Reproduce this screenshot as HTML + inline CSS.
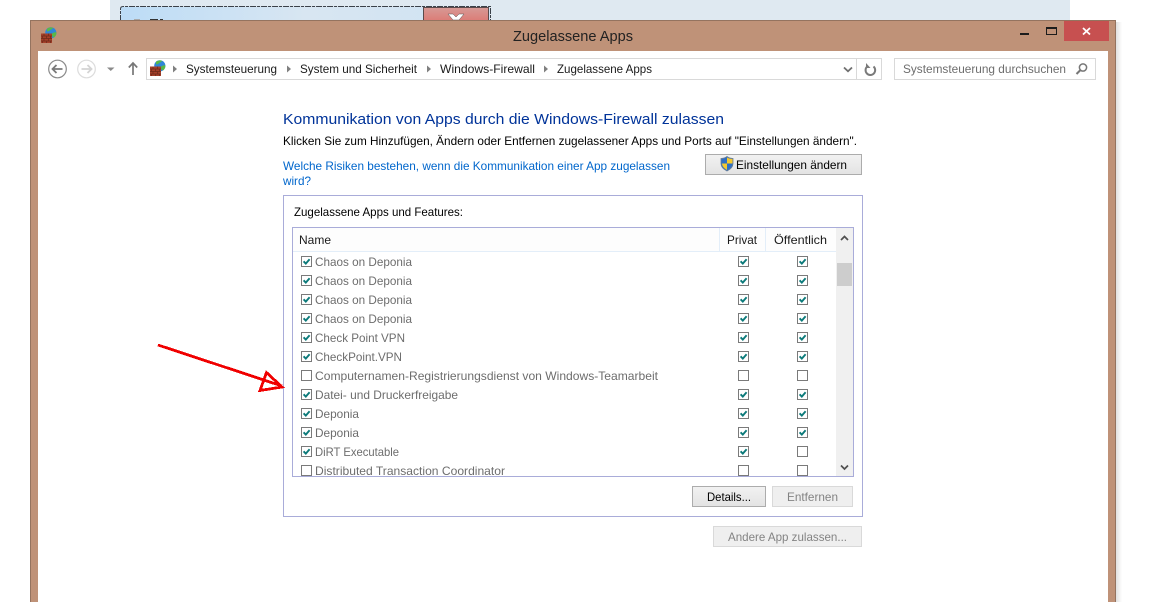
<!DOCTYPE html>
<html lang="de"><head><meta charset="utf-8"><title>Zugelassene Apps</title>
<style>
html,body{margin:0;padding:0;background:#fff;width:1170px;height:602px;overflow:hidden}
svg{display:block}
text{font-family:"Liberation Sans",sans-serif;font-size:12px;fill:#1a1a1a}
.g{fill:#6d6d6d}
.d{fill:#838383}
.l{fill:#0066cc}
</style></head><body>
<svg width="1170" height="602" viewBox="0 0 1170 602" xmlns="http://www.w3.org/2000/svg">
<defs>
<linearGradient id="bt" x1="0" y1="0" x2="0" y2="1"><stop offset="0" stop-color="#f2f2f2"/><stop offset="1" stop-color="#e3e3e3"/></linearGradient>
<linearGradient id="bw" x1="0" y1="0" x2="1" y2="0"><stop offset="0" stop-color="#bcdcf6"/><stop offset=".5" stop-color="#d8e6f2"/><stop offset="1" stop-color="#cfe2f3"/></linearGradient>
<linearGradient id="rd" x1="0" y1="0" x2="0" y2="1"><stop offset="0" stop-color="#d79a96"/><stop offset="1" stop-color="#dc7a74"/></linearGradient>
<linearGradient id="sh" x1="0" y1="0" x2="1" y2="0"><stop offset="0" stop-color="#000" stop-opacity=".12"/><stop offset="1" stop-color="#000" stop-opacity="0"/></linearGradient>
<symbol id="off" width="12" height="12" viewBox="0 0 12 12"><rect x=".5" y=".5" width="10" height="10" fill="#fff" stroke="#7a7a7a"/></symbol>
<symbol id="on" width="12" height="12" viewBox="0 0 12 12"><rect x=".5" y=".5" width="10" height="10" fill="#fff" stroke="#7a7a7a"/><path d="M2.600 5.300 4.800 7.600 8.600 3.200" fill="none" stroke="#0c7a7a" stroke-width="1.900"/></symbol>
<symbol id="fw" width="16" height="16" viewBox="0 0 16 16">
<circle cx="9.800" cy="5.800" r="5.600" fill="#2f86d8"/>
<path d="M6 1.800C8 .2 10.500 0 12 .8c-.5 1.500-2 1.500-3 2.500S7 4.500 6 4.200zM11 6.500c1.500-1 3-1.500 4.300-1.200.3 2-.5 4-2.300 5.200-1.500-.5-2.500-2.200-2-4z" fill="#58b848"/>
<rect x="0" y="6.500" width="11" height="9.500" fill="#a5402a"/>
<path d="M0 9h11M0 11.500h11M0 14h11M3 6.500V9M7.500 6.500V9M1.500 9v2.500M5.500 9v2.500M9.500 9v2.500M3 11.500V14M7.500 11.500V14M1.500 14v2M5.500 14v2M9.500 14v2" stroke="#6d2a1a" stroke-width=".7" fill="none"/>
</symbol>
</defs>

<!-- background window -->
<rect x="110" y="0" width="960" height="21" fill="#dfe9f1"/>
<rect x="121" y="7" width="369" height="14" fill="url(#bw)"/>
<path d="M120.500 21V9q0-2.500 2.500-2.500H490.500V21" fill="none" stroke="#3a4048" stroke-width="1" stroke-dasharray="6 1 3 1"/>
<rect x="423.500" y="7.500" width="65" height="14" fill="url(#rd)" stroke="#5a4a4a" stroke-width="1"/>
<path d="M448 14h5l3 3 3-3h5l-5 6h-6z" fill="#fff" stroke="#555" stroke-width=".5"/>
<rect x="134" y="19" width="6" height="2" fill="#aaa"/><rect x="150" y="19" width="8" height="2" fill="#333"/><rect x="160" y="19" width="3" height="2" fill="#333"/>

<!-- main window -->
<rect x="1116" y="22" width="6" height="580" fill="url(#sh)"/>
<rect x="30.500" y="20.500" width="1085" height="590" fill="#bf9278" stroke="#94735f"/>
<rect x="38" y="51" width="1070" height="560" fill="#fff"/>
<use href="#fw" x="41" y="27"/>
<text x="513" y="41" textLength="120" lengthAdjust="spacingAndGlyphs" style="font-size:14.500px;fill:#222">Zugelassene Apps</text>
<rect x="1020" y="33" width="9" height="2" fill="#1c1c1c"/>
<rect x="1046.500" y="27.500" width="10" height="7" fill="none" stroke="#1c1c1c"/><rect x="1046" y="27" width="11" height="2" fill="#1c1c1c"/>
<rect x="1064" y="21" width="45" height="20" fill="#c75050"/>
<path d="M1083 28l7 6.500M1090 28l-7 6.500" stroke="#fff" stroke-width="1.800"/>

<!-- nav -->
<circle cx="57.500" cy="69" r="8.800" fill="#fff" stroke="#8a8a8a" stroke-width="1.200"/>
<path d="M62.500 69H53M56.500 65 52.500 69l4 4" fill="none" stroke="#7a7a7a" stroke-width="1.800"/>
<circle cx="86.500" cy="69" r="8.800" fill="#fff" stroke="#dcdcdc" stroke-width="1.200"/>
<path d="M81.500 69H91M87.500 65l4 4-4 4" fill="none" stroke="#d4d4d4" stroke-width="1.800"/>
<path d="M107 67.500h7.500L110.750 71z" fill="#8a8a8a"/>
<path d="M133 75V63.500M128.800 67.500 133 63l4.200 4.500" fill="none" stroke="#777" stroke-width="1.700"/>
<rect x="146.500" y="58.500" width="735" height="21" fill="#fff" stroke="#d9d9d9"/>
<path d="M856.500 59v20" stroke="#d9d9d9"/>
<use href="#fw" x="150" y="60"/>
<path d="M173 65.500l4 3.500-4 3.500z" fill="#808080"/>
<text x="186" y="73" textLength="91" lengthAdjust="spacingAndGlyphs">Systemsteuerung</text>
<path d="M287 65.500l4 3.500-4 3.500z" fill="#808080"/>
<text x="300" y="73" textLength="117" lengthAdjust="spacingAndGlyphs">System und Sicherheit</text>
<path d="M427 65.500l4 3.500-4 3.500z" fill="#808080"/>
<text x="440" y="73" textLength="95" lengthAdjust="spacingAndGlyphs">Windows-Firewall</text>
<path d="M544 65.500l4 3.500-4 3.500z" fill="#808080"/>
<text x="557" y="73" textLength="95" lengthAdjust="spacingAndGlyphs">Zugelassene Apps</text>
<path d="M844 67.500l4 3.800 4-3.800" fill="none" stroke="#707070" stroke-width="1.800"/>
<path d="M873.500 66.500a4.800 4.800 0 1 1-6-.2" fill="none" stroke="#7a7a7a" stroke-width="2"/><path d="M866 63v5h4.500z" fill="#7a7a7a"/>
<rect x="894.500" y="58.500" width="201" height="21" fill="#fff" stroke="#d9d9d9"/>
<text x="903" y="73" textLength="163" lengthAdjust="spacingAndGlyphs" class="g">Systemsteuerung durchsuchen</text>
<circle cx="1083" cy="67.500" r="3.600" fill="none" stroke="#777" stroke-width="1.500"/><path d="M1080.500 70l-4 4" stroke="#777" stroke-width="2"/>

<!-- heading -->
<text x="283" y="124" textLength="441" lengthAdjust="spacingAndGlyphs" style="font-size:15px;fill:#003399">Kommunikation von Apps durch die Windows-Firewall zulassen</text>
<text x="283" y="145" textLength="574" lengthAdjust="spacingAndGlyphs" style="fill:#000">Klicken Sie zum Hinzufügen, Ändern oder Entfernen zugelassener Apps und Ports auf "Einstellungen ändern".</text>
<text x="283" y="170" textLength="387" lengthAdjust="spacingAndGlyphs" class="l">Welche Risiken bestehen, wenn die Kommunikation einer App zugelassen</text>
<text x="283" y="185" textLength="28" lengthAdjust="spacingAndGlyphs" class="l">wird?</text>

<!-- settings button -->
<rect x="705.500" y="154.500" width="156" height="20" fill="url(#bt)" stroke="#acacac"/>
<path d="M727 156.500c2 1.500 4 2 6 2v5c0 3.500-3 6-6 7.500-3-1.500-6-4-6-7.500v-5c2 0 4-.5 6-2z" fill="#2f6fc4" stroke="#6b7f96" stroke-width=".8"/>
<path d="M727 157.500v6h5.500v-4.500c-2 0-4-.5-5.500-1.500zM727 163.500h-5c.2 3 2.500 5 5 6.500z" fill="#f5c92e"/>
<text x="736" y="169" textLength="111" lengthAdjust="spacingAndGlyphs" style="fill:#000">Einstellungen ändern</text>

<!-- group box -->
<rect x="283.500" y="195.500" width="579" height="321" fill="#fff" stroke="#a9acd9"/>
<text x="294" y="216" textLength="169" lengthAdjust="spacingAndGlyphs" style="fill:#000">Zugelassene Apps und Features:</text>

<!-- list -->
<rect x="292.500" y="227.500" width="561" height="249" fill="#fff" stroke="#a9acd9"/>
<rect x="293" y="228" width="543" height="23" fill="#fdfdfd"/>
<path d="M293 251.500h543M719.500 228v23M765.500 228v23" stroke="#e3eef9" fill="none"/>
<text x="299" y="244" textLength="32" lengthAdjust="spacingAndGlyphs">Name</text>
<text x="727" y="244" textLength="30" lengthAdjust="spacingAndGlyphs">Privat</text>
<text x="774" y="244" textLength="53" lengthAdjust="spacingAndGlyphs">Öffentlich</text>

<rect x="836" y="228" width="17" height="248" fill="#f0f0f0"/>
<rect x="837" y="263" width="15" height="23" fill="#cdcdcd"/>
<path d="M841 240l3.500-3.500 3.500 3.500" fill="none" stroke="#505050" stroke-width="1.700"/>
<path d="M841 465.500l3.500 3.500 3.500-3.500" fill="none" stroke="#505050" stroke-width="1.700"/>

<use href="#on" x="301" y="256"/><text class="g" x="315" y="266" textLength="97" lengthAdjust="spacingAndGlyphs">Chaos on Deponia</text><use href="#on" x="738" y="256"/><use href="#on" x="797" y="256"/>
<use href="#on" x="301" y="275"/><text class="g" x="315" y="285" textLength="97" lengthAdjust="spacingAndGlyphs">Chaos on Deponia</text><use href="#on" x="738" y="275"/><use href="#on" x="797" y="275"/>
<use href="#on" x="301" y="294"/><text class="g" x="315" y="304" textLength="97" lengthAdjust="spacingAndGlyphs">Chaos on Deponia</text><use href="#on" x="738" y="294"/><use href="#on" x="797" y="294"/>
<use href="#on" x="301" y="313"/><text class="g" x="315" y="323" textLength="97" lengthAdjust="spacingAndGlyphs">Chaos on Deponia</text><use href="#on" x="738" y="313"/><use href="#on" x="797" y="313"/>
<use href="#on" x="301" y="332"/><text class="g" x="315" y="342" textLength="90" lengthAdjust="spacingAndGlyphs">Check Point VPN</text><use href="#on" x="738" y="332"/><use href="#on" x="797" y="332"/>
<use href="#on" x="301" y="351"/><text class="g" x="315" y="361" textLength="87" lengthAdjust="spacingAndGlyphs">CheckPoint.VPN</text><use href="#on" x="738" y="351"/><use href="#on" x="797" y="351"/>
<use href="#off" x="301" y="370"/><text class="g" x="315" y="380" textLength="343" lengthAdjust="spacingAndGlyphs">Computernamen-Registrierungsdienst von Windows-Teamarbeit</text><use href="#off" x="738" y="370"/><use href="#off" x="797" y="370"/>
<use href="#on" x="301" y="389"/><text class="g" x="315" y="399" textLength="143" lengthAdjust="spacingAndGlyphs">Datei- und Druckerfreigabe</text><use href="#on" x="738" y="389"/><use href="#on" x="797" y="389"/>
<use href="#on" x="301" y="408"/><text class="g" x="315" y="418" textLength="44" lengthAdjust="spacingAndGlyphs">Deponia</text><use href="#on" x="738" y="408"/><use href="#on" x="797" y="408"/>
<use href="#on" x="301" y="427"/><text class="g" x="315" y="437" textLength="44" lengthAdjust="spacingAndGlyphs">Deponia</text><use href="#on" x="738" y="427"/><use href="#on" x="797" y="427"/>
<use href="#on" x="301" y="446"/><text class="g" x="315" y="456" textLength="84" lengthAdjust="spacingAndGlyphs">DiRT Executable</text><use href="#on" x="738" y="446"/><use href="#off" x="797" y="446"/>
<use href="#off" x="301" y="465"/><text class="g" x="315" y="475" textLength="190" lengthAdjust="spacingAndGlyphs">Distributed Transaction Coordinator</text><use href="#off" x="738" y="465"/><use href="#off" x="797" y="465"/>

<!-- buttons -->
<rect x="692.500" y="486.500" width="73" height="20" fill="url(#bt)" stroke="#acacac"/>
<text x="707" y="501" textLength="44" lengthAdjust="spacingAndGlyphs" style="fill:#000">Details...</text>
<rect x="772.500" y="486.500" width="80" height="20" fill="#efefef" stroke="#d9d9d9"/>
<text class="d" x="787" y="501" textLength="51" lengthAdjust="spacingAndGlyphs">Entfernen</text>
<rect x="713.500" y="526.500" width="148" height="20" fill="#efefef" stroke="#d9d9d9"/>
<text class="d" x="728" y="541" textLength="119" lengthAdjust="spacingAndGlyphs">Andere App zulassen...</text>

<!-- red arrow -->
<path d="M158 345 282 386M266.500 372.500 282 387 260 390.500z" fill="none" stroke="#f00000" stroke-width="2.800" shape-rendering="crispEdges"/>
</svg>
</body></html>
